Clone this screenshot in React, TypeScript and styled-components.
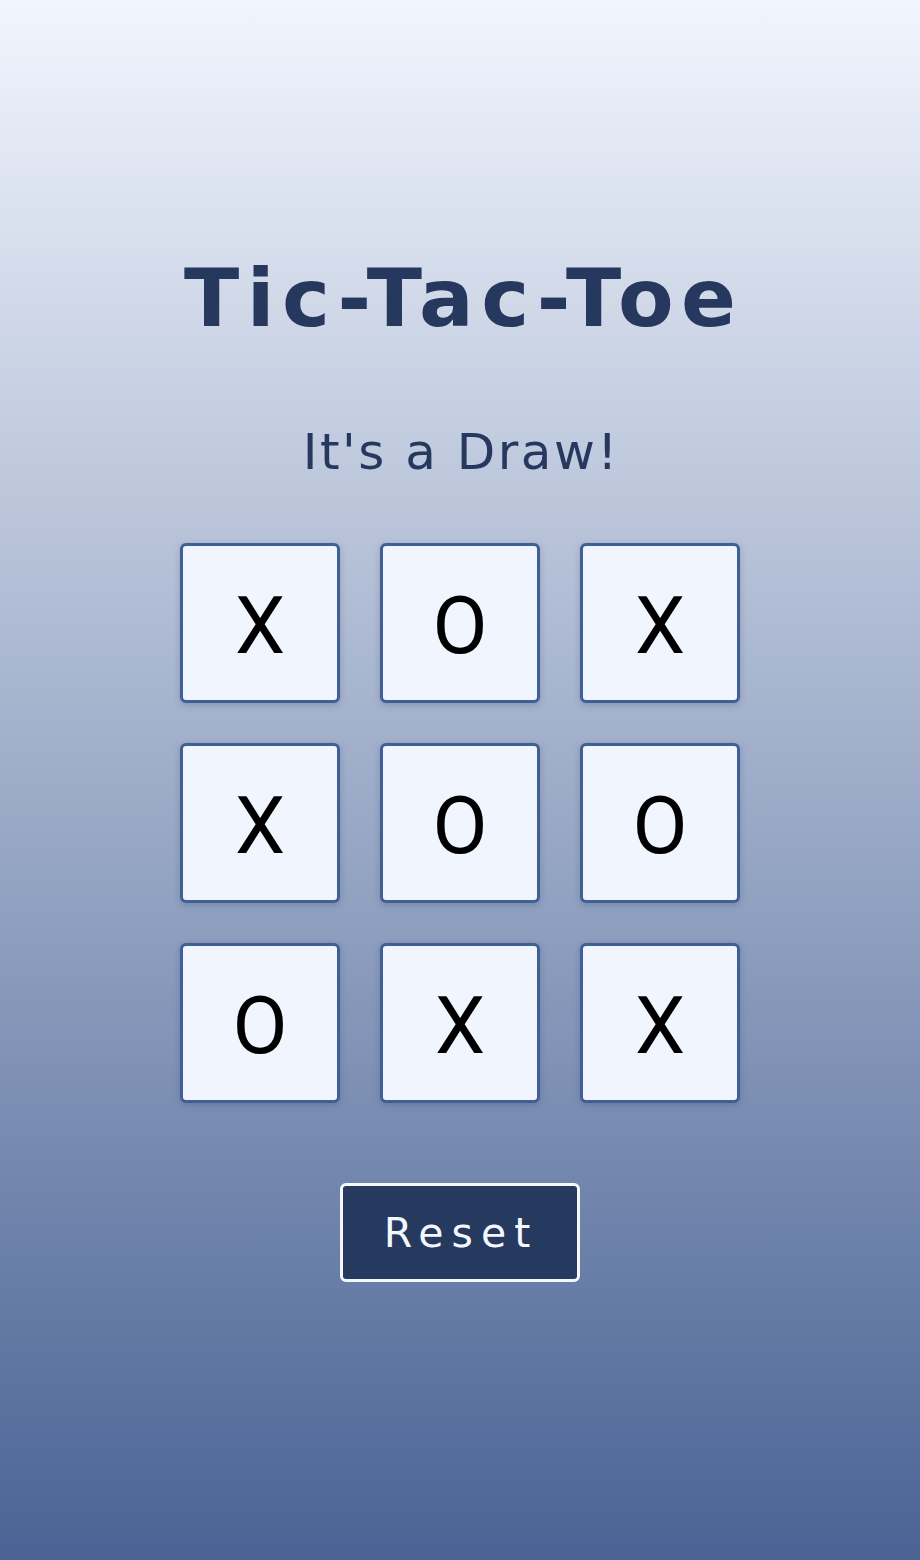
import React from "react";
import styled, { createGlobalStyle } from "styled-components";

const GlobalStyle = createGlobalStyle`
  html, body {
    margin: 0;
    padding: 0;
  }
  body {
    font-family: "DejaVu Sans", "Liberation Sans", sans-serif;
  }
`;

const Page = styled.div`
  min-height: 1560px;
  background: linear-gradient(to bottom, #f1f5fd 0%, #4a6394 100%);
  display: flex;
  flex-direction: column;
  align-items: center;
  padding-top: 258px;
  box-sizing: border-box;
`;

const Title = styled.h1`
  margin: 0;
  font-family: "DejaVu Sans", sans-serif;
  font-weight: 700;
  font-size: 81px;
  line-height: 81px;
  letter-spacing: 7.5px;
  padding-left: 7.5px;
  color: #26385e;
`;

const Status = styled.p`
  margin: 88px 0 0;
  font-family: "DejaVu Sans", sans-serif;
  font-weight: 400;
  font-size: 50px;
  line-height: 50px;
  letter-spacing: 2.5px;
  padding-left: 2.5px;
  color: #26385e;
`;

const Board = styled.div`
  margin-top: 66px;
  display: grid;
  grid-template-columns: repeat(3, 160px);
  grid-auto-rows: 160px;
  gap: 40px;
`;

const Cell = styled.button`
  box-sizing: border-box;
  width: 160px;
  height: 160px;
  padding: 6px 0 0;
  border: 3px solid #3f5f95;
  border-radius: 6px;
  background: #f1f5fe;
  box-shadow: 0 2px 6px rgba(38, 56, 94, 0.25);
  font-family: Roboto, sans-serif;
  font-weight: 400;
  font-size: 80px;
  line-height: 1;
  color: #000;
  display: flex;
  align-items: center;
  justify-content: center;
  cursor: pointer;
`;

const ResetButton = styled.button`
  margin-top: 80px;
  box-sizing: border-box;
  width: 240px;
  height: 99px;
  border: 3px solid #f4f7fd;
  border-radius: 6px;
  background: #263a5f;
  color: #f4f7fd;
  font-family: "DejaVu Sans", sans-serif;
  font-size: 41px;
  letter-spacing: 8px;
  padding: 0 0 0 2px;
  cursor: pointer;
`;

const board = ["X", "O", "X", "X", "O", "O", "O", "X", "X"];

export default function App() {
  return (
    <>
      <GlobalStyle />
      <Page>
        <Title>Tic-Tac-Toe</Title>
        <Status>It's a Draw!</Status>
        <Board>
          {board.map((v, i) => (
            <Cell key={i}>{v}</Cell>
          ))}
        </Board>
        <ResetButton>Reset</ResetButton>
      </Page>
    </>
  );
}
